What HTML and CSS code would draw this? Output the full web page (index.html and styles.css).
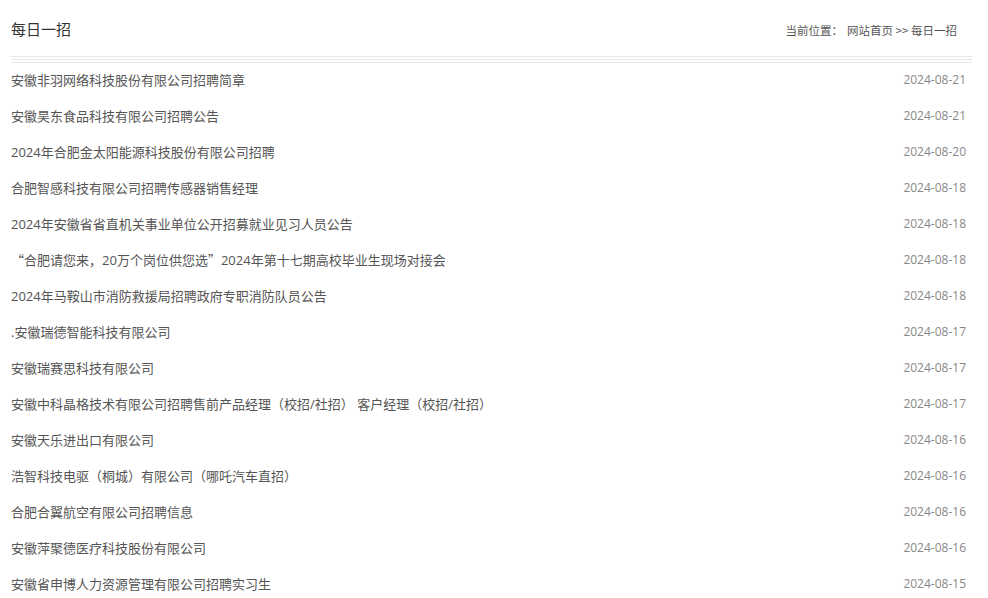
FILE: index.html
```html
<!DOCTYPE html>
<html lang="zh-CN">
<head>
  <meta charset="UTF-8">
  <title>每日一招</title>
  <link rel="stylesheet" href="styles.css">
</head>
<body>
  <div class="main">
    <div class="head">
      <h2>每日一招</h2>
      <div class="crumb">当前位置：<a href="#" class="home">网站首页</a> &gt;&gt; <a href="#">每日一招</a></div>
    </div>
    <div class="rule"></div>

    <ul class="news">
      <li><a href="#">安徽非羽网络科技股份有限公司招聘简章</a><span class="date">2024-08-21</span></li>
      <li><a href="#">安徽昊东食品科技有限公司招聘公告</a><span class="date">2024-08-21</span></li>
      <li><a href="#">2024年合肥金太阳能源科技股份有限公司招聘</a><span class="date">2024-08-20</span></li>
      <li><a href="#">合肥智感科技有限公司招聘传感器销售经理</a><span class="date">2024-08-18</span></li>
      <li><a href="#">2024年安徽省省直机关事业单位公开招募就业见习人员公告</a><span class="date">2024-08-18</span></li>
      <li><a href="#"><span class="cjk">“</span>合肥请您来，20万个岗位供您选<span class="cjk">”</span>2024年第十七期高校毕业生现场对接会</a><span class="date">2024-08-18</span></li>
      <li><a href="#">2024年马鞍山市消防救援局招聘政府专职消防队员公告</a><span class="date">2024-08-18</span></li>
      <li><a href="#">.安徽瑞德智能科技有限公司</a><span class="date">2024-08-17</span></li>
      <li><a href="#">安徽瑞赛思科技有限公司</a><span class="date">2024-08-17</span></li>
      <li><a href="#">安徽中科晶格技术有限公司招聘售前产品经理（校招/社招） 客户经理（校招/社招）</a><span class="date">2024-08-17</span></li>
      <li><a href="#">安徽天乐进出口有限公司</a><span class="date">2024-08-16</span></li>
      <li><a href="#">浩智科技电驱（桐城）有限公司（哪吒汽车直招）</a><span class="date">2024-08-16</span></li>
      <li><a href="#">合肥合翼航空有限公司招聘信息</a><span class="date">2024-08-16</span></li>
      <li><a href="#">安徽萍聚德医疗科技股份有限公司</a><span class="date">2024-08-16</span></li>
      <li><a href="#">安徽省申博人力资源管理有限公司招聘实习生</a><span class="date">2024-08-15</span></li>
    </ul>
  </div>
</body>
</html>
```

FILE: styles.css
```css
body {
  margin: 0;
  background: #fff;
  font-family: "Open Sans", "Noto Sans CJK SC", sans-serif;
  color: #555;
}

a {
  color: inherit;
  text-decoration: none;
}

.main {
  width: 961px;
  margin-left: 11px;
}

.head {
  height: 56px;
  display: flex;
  justify-content: space-between;
  align-items: center;
}

.head h2 {
  margin: 0;
  font-size: 15px;
  font-weight: normal;
  color: #333;
}

.crumb {
  font-size: 11.5px;
  color: #555;
  padding-right: 15px;
  margin-top: 3px;
  font-family: "Noto Sans CJK SC", sans-serif;
}

.crumb .home {
  margin-left: 4px;
}

.rule {
  height: 5px;
  border-top: 1px solid #e6e6e6;
  border-bottom: 1px solid #e6e6e6;
  background: linear-gradient(#e6e6e6, #e6e6e6) center / 100% 1px no-repeat;
}

.news {
  list-style: none;
  margin: 0;
  padding: 0;
}

.news li {
  box-sizing: border-box;
  height: 36px;
  padding-bottom: 4px;
  display: flex;
  justify-content: space-between;
  align-items: center;
  font-size: 13px;
  color: #555;
}

.cjk {
  font-family: "Noto Sans CJK SC", sans-serif;
}

.news .date {
  font-size: 12px;
  color: #888;
  padding-right: 6px;
}
```
